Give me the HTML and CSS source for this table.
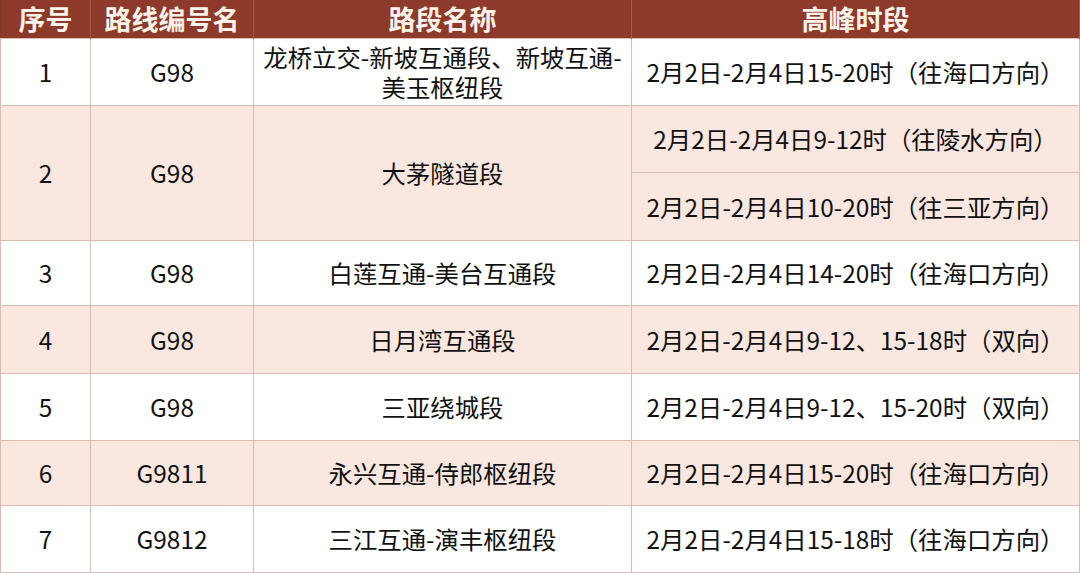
FILE: index.html
```html
<!DOCTYPE html>
<html lang="zh-CN">
<head>
<meta charset="utf-8">
<link rel="stylesheet" href="styles.css">
</head>
<body>
<table class="tbl">
  <colgroup>
    <col class="c1"><col class="c2"><col class="c3"><col class="c4">
  </colgroup>
  <thead>
    <tr class="head"><th>序号</th><th>路线编号名</th><th>路段名称</th><th>高峰时段</th></tr>
  </thead>
  <tbody>
    <tr class="r h67"><td>1</td><td>G98</td><td class="name">龙桥立交-新坡互通段、新坡互通-美玉枢纽段</td><td>2月2日-2月4日15-20时（往海口方向）</td></tr>
    <tr class="r alt h67"><td rowspan="2">2</td><td rowspan="2">G98</td><td rowspan="2">大茅隧道段</td><td>2月2日-2月4日9-12时（往陵水方向）</td></tr>
    <tr class="r alt h68"><td>2月2日-2月4日10-20时（往三亚方向）</td></tr>
    <tr class="r h65"><td>3</td><td>G98</td><td>白莲互通-美台互通段</td><td>2月2日-2月4日14-20时（往海口方向）</td></tr>
    <tr class="r alt h68"><td>4</td><td>G98</td><td>日月湾互通段</td><td>2月2日-2月4日9-12、15-18时（双向）</td></tr>
    <tr class="r h67"><td>5</td><td>G98</td><td>三亚绕城段</td><td>2月2日-2月4日9-12、15-20时（双向）</td></tr>
    <tr class="r alt h65"><td>6</td><td>G9811</td><td>永兴互通-侍郎枢纽段</td><td>2月2日-2月4日15-20时（往海口方向）</td></tr>
    <tr class="r h67"><td>7</td><td>G9812</td><td>三江互通-演丰枢纽段</td><td>2月2日-2月4日15-18时（往海口方向）</td></tr>
  </tbody>
</table>
</body>
</html>
```

FILE: styles.css
```css
html, body {
  margin: 0;
  padding: 0;
  background: #ffffff;
}
.tbl {
  width: 1080px;
  border-collapse: collapse;
  table-layout: fixed;
  font-family: "Microsoft YaHei", "Noto Sans CJK SC", "Noto Sans", sans-serif;
  color: #111111;
  border-left: 1px solid #7a3a2c;
  border-bottom: 1px solid #7a3a2c;
  border-right: 1px solid #e2c6bd;
}
.c1 { width: 90px; }
.c2 { width: 163px; }
.c3 { width: 378px; }
.c4 { width: auto; }
.head th {
  height: 38px;
  padding: 0;
  background: #8d3a2b;
  color: #fdf3ea;
  font-size: 27px;
  font-weight: 700;
  line-height: 30px;
  text-align: center;
  border-right: 1px solid #a8594a;
}
.r td {
  padding: 0 4px;
  font-size: 24.4px;
  line-height: 30px;
  text-align: center;
  vertical-align: middle;
  border: 1px solid #dcbcb1;
}
.alt td { background: #fae7e0; }
.name { padding: 0 4px; }
.h65 { height: 65px; }
.h67 { height: 67px; }
.h68 { height: 68px; }
```
